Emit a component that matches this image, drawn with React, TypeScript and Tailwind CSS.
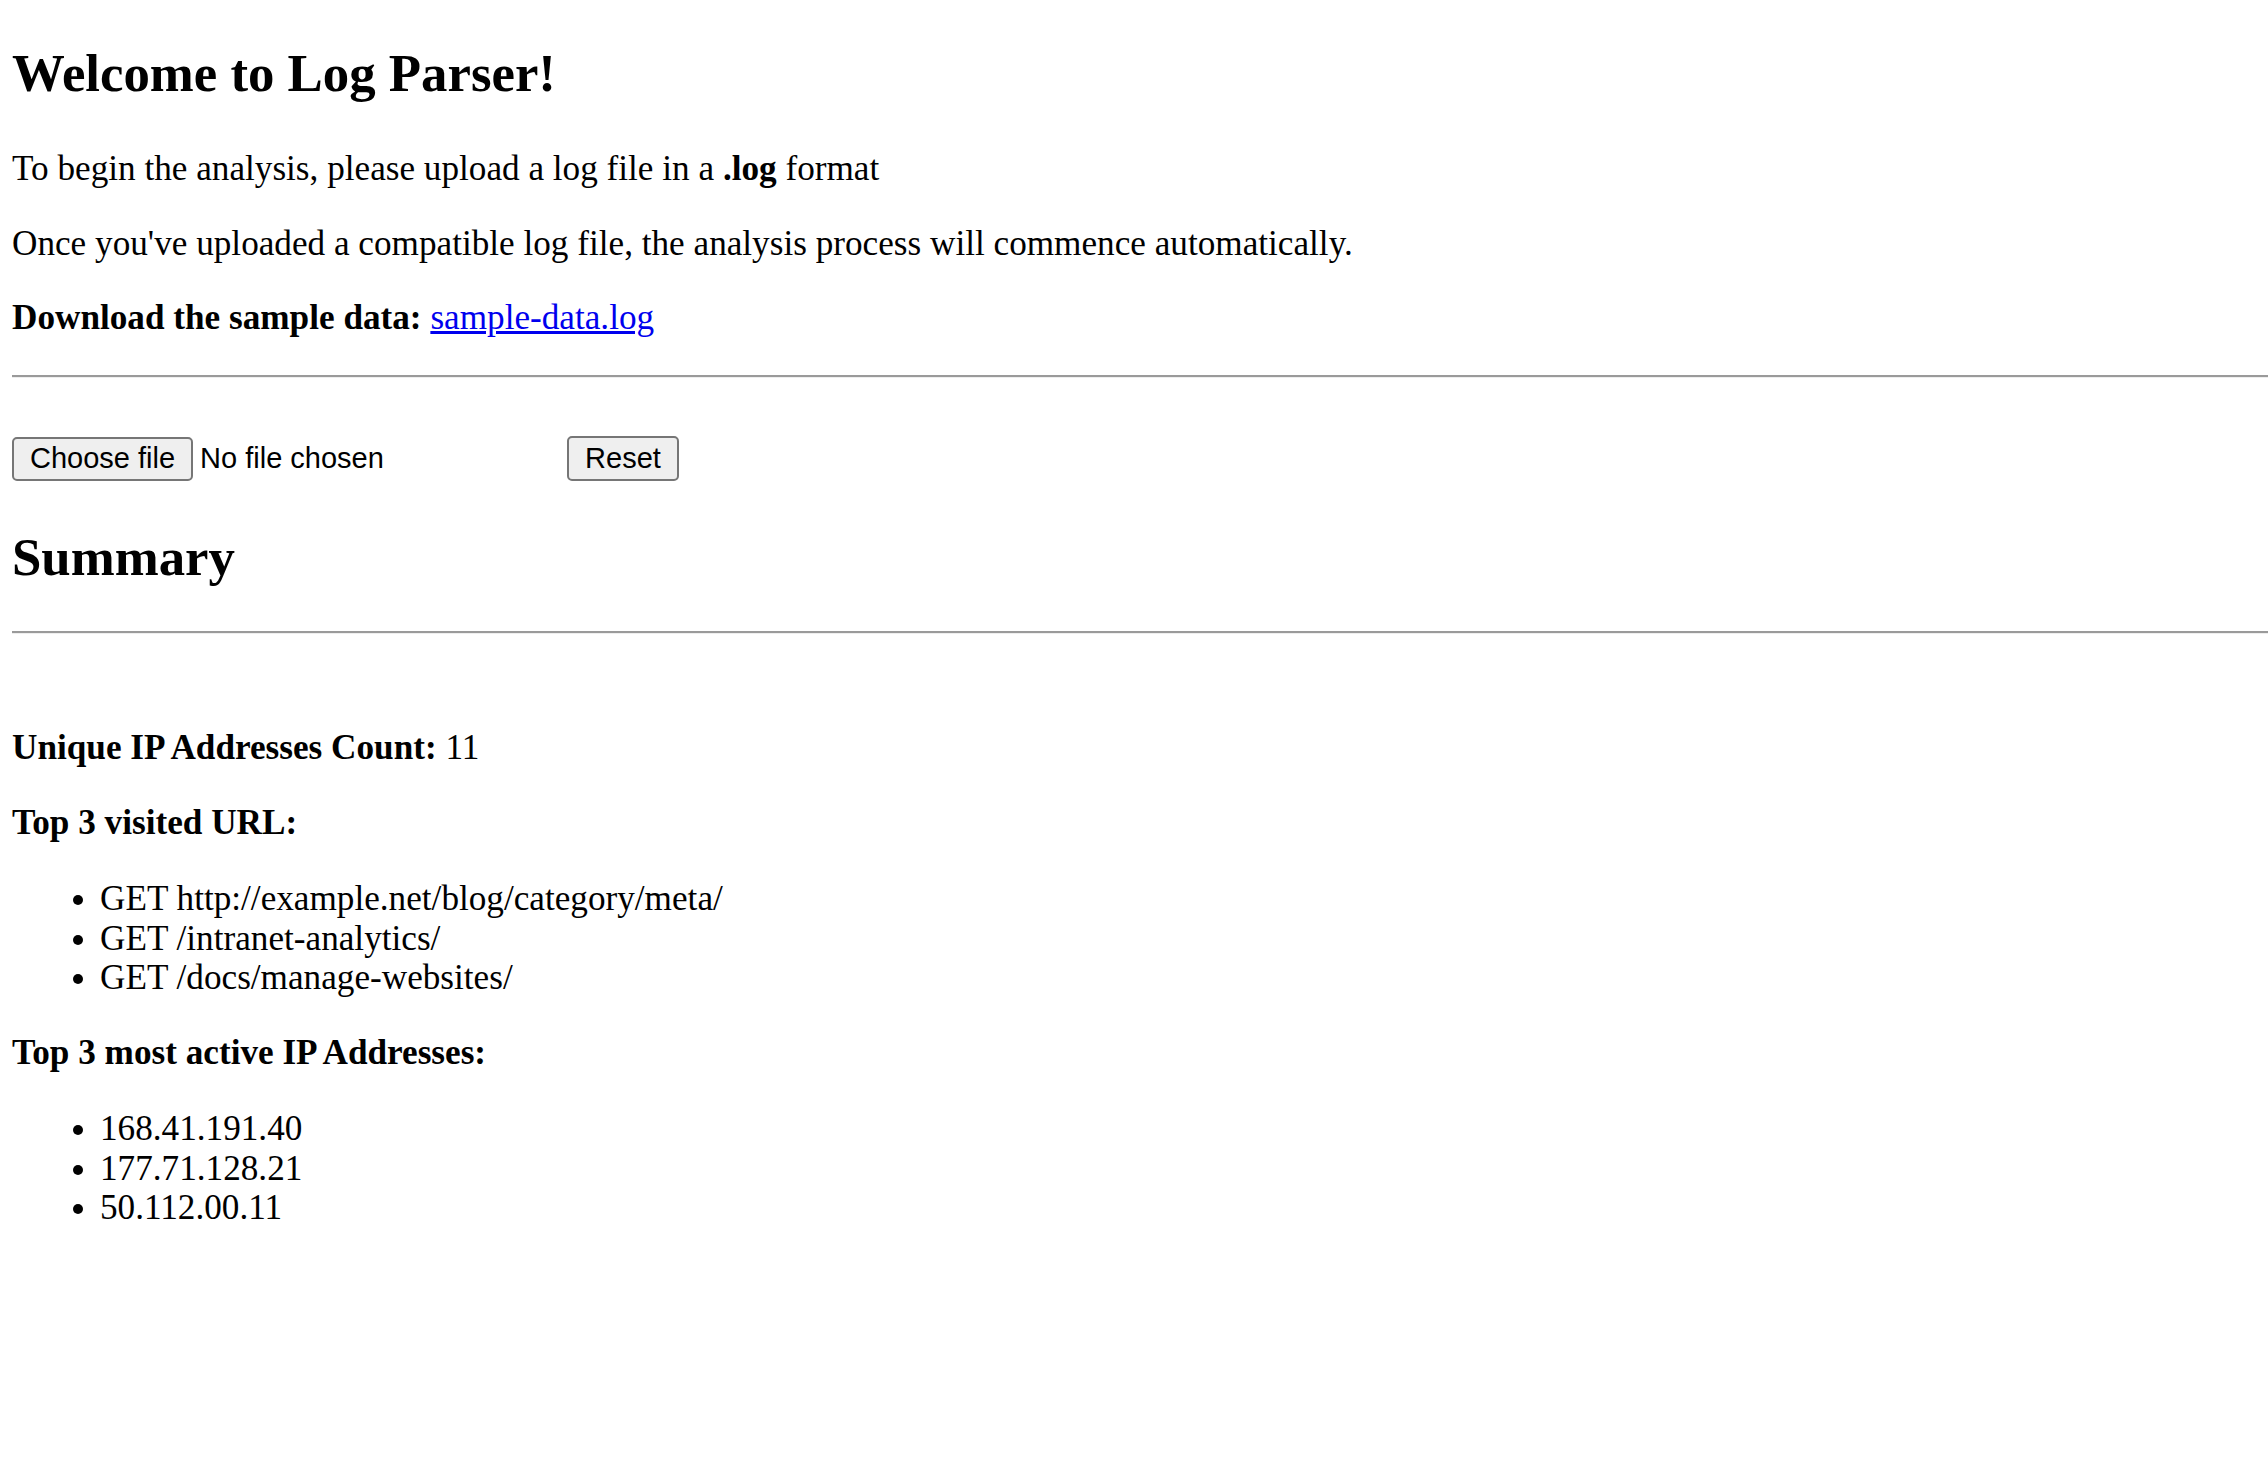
import React from "react"

const topUrls = [
  "GET http://example.net/blog/category/meta/",
  "GET /intranet-analytics/",
  "GET /docs/manage-websites/",
]

const topIps = ["168.41.191.40", "177.71.128.21", "50.112.00.11"]

const sans = "font-['Liberation_Sans',Arial,sans-serif]"

export default function App() {
  return (
    <div className="min-h-screen overflow-hidden bg-white px-[12px] pt-[42.5px] font-['Liberation_Serif','Times_New_Roman',serif] text-[35.2px] leading-[40px] text-black">
      <section>
        <h1 className="text-[52.8px] font-bold leading-[60px]">Welcome to Log Parser!</h1>
        <p className="mt-[46.5px]">
          To begin the analysis, please upload a log file in a <strong className="font-bold">.log</strong> format
        </p>
        <p className="mt-[34.6px]">
          Once you've uploaded a compatible log file, the analysis process will commence automatically.
        </p>
        <p className="mt-[34.6px]">
          <strong className="font-bold">Download the sample data:</strong>{" "}
          <a href="#" className="text-[#0000ee] underline">sample-data.log</a>
        </p>
      </section>

      <hr className="-mr-[12px] mt-[36.6px] h-0 border-0 border-t-[2px] border-b-[1.5px] border-t-[#9a9a9a] border-b-[#eeeeee]" />

      {/* File picker row */}
      <div className={`mt-[58.5px] flex items-center ${sans} text-[29px] leading-none`}>
        <button className="h-[44.5px] rounded-[5px] border-2 border-[#767676] bg-[#efefef] px-[16px] text-black">
          Choose file
        </button>
        <span className="ml-[7px] w-[367px]">No file chosen</span>
        <button className="h-[45px] rounded-[5px] border-2 border-[#767676] bg-[#efefef] px-[16px] text-black">
          Reset
        </button>
      </div>

      <h2 className="mt-[45.8px] text-[52.8px] font-bold leading-[60px]">Summary</h2>

      <hr className="-mr-[12px] mt-[44px] h-0 border-0 border-t-[2px] border-b-[1.5px] border-t-[#9a9a9a] border-b-[#eeeeee]" />

      <p className="mt-[94px]">
        <strong className="font-bold">Unique IP Addresses Count:</strong> 11
      </p>

      <p className="mt-[35px] font-bold">Top 3 visited URL:</p>
      <ul className="mt-[36px] list-disc pl-[88px] leading-[39.5px]">
        {topUrls.map((u) => (
          <li key={u}>{u}</li>
        ))}
      </ul>

      <p className="mt-[35.5px] font-bold">Top 3 most active IP Addresses:</p>
      <ul className="mt-[36px] list-disc pl-[88px] leading-[39.5px]">
        {topIps.map((ip) => (
          <li key={ip}>{ip}</li>
        ))}
      </ul>
    </div>
  )
}
